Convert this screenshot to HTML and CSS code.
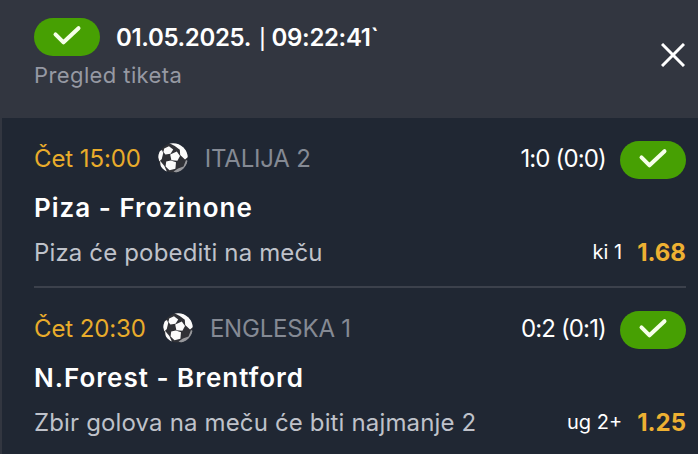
FILE: index.html
```
<!DOCTYPE html>
<html lang="sr">
<head>
<meta charset="UTF-8">
<meta name="viewport" content="width=device-width, initial-scale=1.0">
<title>Pregled tiketa</title>
<link rel="stylesheet" href="styles.css">
</head>
<body>

<svg width="0" height="0" class="sprite">
  <symbol id="check" viewBox="0 0 66 38">
    <path d="M21.5 16.4 L29.5 24.3 L44.5 10.2" fill="none" stroke="#f6ffe9" stroke-width="4" stroke-linecap="round" stroke-linejoin="round"/>
  </symbol>
  <symbol id="ball" viewBox="0 0 30 30">
    <clipPath id="krug"><circle cx="15" cy="15" r="14.8"/></clipPath>
    <g clip-path="url(#krug)">
      <circle cx="15" cy="15" r="14.8" fill="#303136"/>
      <g fill="#fbfbfb">
        <path d="M6.2 5.5 L11 3.2 L15.2 6.6 L12.5 10.8 L7.4 11.4 L5.4 9 Z"/>
        <path d="M12.2 11.5 L18.8 8.6 L22 13 L19.4 17.8 L13.4 17.3 Z"/>
        <path d="M8.2 18.5 L12.8 17.6 L18 19.3 L17.4 25.8 L11.5 27.2 L7.6 23.5 Z"/>
        <path d="M11 0 L20 0 L26 4 L30 10 L30 14 L27 16.4 L22.2 12 L21.8 6.7 L16.8 3 Z"/>
        <path d="M4 7 L5.2 10 L3.8 16 L1.4 18.4 L0 14 L0 9 Z"/>
        <path d="M2 17.8 L6.4 23 L9 29 L3 26 Z"/>
      </g>
      <path d="M20 25.5 L25.5 23.5 L28 17 L30 18 L27 26 L19 30 L15.5 28.5 Z" fill="#96979b"/>
    </g>
  </symbol>
</svg>

<header class="header">
  <div>
    <div class="ticket">
      <svg class="badge"><use href="#check"/></svg>
      <span class="ticket-time">01.05.2025.<span class="bar">|</span>09:22:41`</span>
    </div>
    <div class="subtitle">Pregled tiketa</div>
  </div>
  <svg class="close" viewBox="0 0 24 24"><path d="M1 1 L23 23 M23 1 L1 23" stroke="#fff" stroke-width="3"/></svg>
</header>

<main class="matches">
  <section class="match">
    <div class="row info">
      <span class="time">Čet 15:00</span>
      <svg class="ball"><use href="#ball"/></svg>
      <span class="league">ITALIJA 2</span>
      <span class="score">1:0 (0:0)</span>
      <svg class="badge"><use href="#check"/></svg>
    </div>
    <div class="row teams">Piza - Frozinone</div>
    <div class="row bet">
      <span class="desc">Piza će pobediti na meču</span>
      <span class="tip">ki 1</span>
      <span class="odds">1.68</span>
    </div>
  </section>

  <section class="match">
    <div class="row info">
      <span class="time">Čet 20:30</span>
      <svg class="ball"><use href="#ball"/></svg>
      <span class="league">ENGLESKA 1</span>
      <span class="score">0:2 (0:1)</span>
      <svg class="badge"><use href="#check"/></svg>
    </div>
    <div class="row teams">N.Forest - Brentford</div>
    <div class="row bet">
      <span class="desc">Zbir golova na meču će biti najmanje 2</span>
      <span class="tip">ug 2+</span>
      <span class="odds">1.25</span>
    </div>
  </section>
</main>

</body>
</html>
```
FILE: styles.css
```
* {
  box-sizing: border-box;
}

body {
  margin: 0;
  height: 454px;
  overflow: hidden;
  background-color: #323640;
  color: #fff;
  font-family: Inter, "Open Sans", sans-serif;
  font-size: 24px;
  white-space: nowrap;
}

.sprite {
  display: block;
}

.header {
  display: flex;
  justify-content: space-between;
  height: 118px;
  padding: 18px 13px 0 34px;
}

.ticket {
  display: flex;
  align-items: center;
  gap: 16px;
  height: 38px;
}

.badge {
  width: 66px;
  height: 38px;
  flex: none;
  border-radius: 19px;
  background-color: #47a003;
}

.ticket-time {
  font-weight: 600;
  letter-spacing: -0.35px;
}

.bar {
  margin: 0 6px 0 8px;
  font-size: 20px;
  font-weight: 500;
}

.subtitle {
  margin-top: 5px;
  color: #9699a3;
  font-size: 22px;
  letter-spacing: 0.4px;
  line-height: 28px;
}

.close {
  width: 24px;
  height: 24px;
  margin-top: 25px;
}

.matches {
  height: 336px;
  margin-left: 2px;
  padding: 0 12px 0 32px;
  background-color: #202733;
}

.match {
  height: 170px;
  padding-top: 23px;
  border-bottom: 2px solid #3c414c;
}

.match:last-child {
  border-bottom: 0;
}

.row {
  display: flex;
  align-items: center;
}

.info {
  height: 38px;
}

.info span,
.ball {
  margin-bottom: 4px;
}

.time {
  color: #e9ac2b;
  letter-spacing: -0.1px;
}

.ball {
  width: 30px;
  height: 30px;
  margin-left: 17px;
  margin-right: 17px;
}

.league {
  color: #858a94;
  letter-spacing: -0.2px;
}

.score {
  margin-left: auto;
  margin-right: 14px;
  letter-spacing: -0.85px;
}

.teams {
  height: 56px;
  padding-top: 1px;
  font-size: 26px;
  font-weight: 600;
  letter-spacing: 1px;
}

.bet {
  height: 34px;
}

.desc {
  color: #bfc2ca;
  letter-spacing: 0.15px;
}

.tip {
  margin-left: auto;
  font-size: 20px;
}

.odds {
  margin-left: 15px;
  color: #eeb132;
  font-weight: 700;
}
```
